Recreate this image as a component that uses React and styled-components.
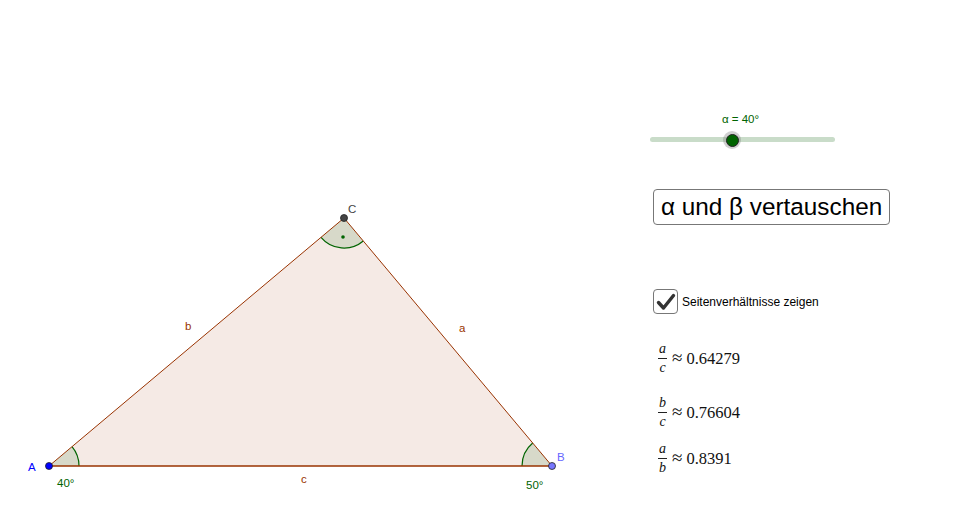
import React from 'react';
import styled, { createGlobalStyle } from 'styled-components';

const Global = createGlobalStyle`
  html, body { margin: 0; padding: 0; background: #fff; }
  body { font-family: "Liberation Sans", Arial, sans-serif; }
`;

const Page = styled.div`
  width: 960px;
  height: 532px;
  display: flex;
  overflow: hidden;
  background: #fff;
`;

const Board = styled.svg`
  flex: 0 0 650px;
  height: 532px;
  font-family: "Liberation Sans", Arial, sans-serif;
`;

const Panel = styled.div`
  display: flex;
  flex-direction: column;
  align-items: flex-start;
  padding-top: 112px;
`;

const SliderBox = styled.div`
  width: 185px;
  display: flex;
  flex-direction: column;
  align-items: center;
`;

const SliderLabel = styled.div`
  font-size: 11.5px;
  line-height: 14px;
  color: #006400;
  margin-left: -4px;
`;

const Track = styled.div`
  position: relative;
  width: 185px;
  height: 18px;
  margin-top: 5px;
  &::before {
    content: '';
    position: absolute;
    left: 0;
    right: 0;
    top: 6px;
    height: 5px;
    border-radius: 3px;
    background: #c9dcc9;
  }
`;

const Knob = styled.div`
  position: absolute;
  top: 0;
  width: 18px;
  height: 18px;
  margin-left: -9px;
  border-radius: 50%;
  background: rgba(120, 120, 120, 0.35);
  display: flex;
  align-items: center;
  justify-content: center;
  &::after {
    content: '';
    width: 11px;
    height: 11px;
    border-radius: 50%;
    background: #006400;
    border: 1px solid #222;
  }
`;

const SwapButton = styled.button`
  margin-top: 40px;
  margin-left: 3px;
  height: 36px;
  padding: 0 7px;
  border: 1px solid #777;
  border-radius: 4px;
  background: #fff;
  font-family: "Liberation Sans", Arial, sans-serif;
  font-size: 24.3px;
  color: #000;
  line-height: 34px;
`;

const CheckRow = styled.label`
  margin-top: 64px;
  margin-left: 3px;
  display: flex;
  align-items: center;
  gap: 4px;
  font-size: 12px;
  color: #000;
`;

const Box = styled.span`
  width: 23px;
  height: 23px;
  border: 1.5px solid #777;
  border-radius: 4px;
  display: flex;
  align-items: center;
  justify-content: center;
`;

const Formula = styled.div`
  margin-top: ${p => p.$gap}px;
  margin-left: 8px;
  height: 32px;
  display: flex;
  align-items: center;
  gap: 5px;
  font-family: "Liberation Serif", "Times New Roman", serif;
  font-size: 16.5px;
  color: #111;
`;

const Approx = styled.span`
  font-size: 19px;
  margin-right: 4px;
`;

const Frac = styled.span`
  display: inline-flex;
  flex-direction: column;
  align-items: center;
  font-style: italic;
  font-size: 14px;
  line-height: 14px;
  & > span:first-child {
    border-bottom: 1px solid #222;
    padding: 0 1px 2px;
  }
  & > span:last-child {
    padding-top: 2px;
  }
`;

const A = [49, 466];
const B = [552, 466];
const C = [344, 218];

function Triangle() {
  const brown = '#993300';
  const green = '#006400';
  const sector = 'rgba(0,100,0,0.12)';
  return (
    <Board viewBox="0 0 650 532">
      <polygon
        points={`${A} ${B} ${C}`}
        fill="rgba(153,51,0,0.1)"
        stroke="none"
      />
      {/* angle at A */}
      <path d="M49 466 L79 466 A30 30 0 0 0 72 446.7 Z" fill={sector} />
      <path d="M79 466 A30 30 0 0 0 72 446.7" fill="none" stroke={green} strokeWidth="1.2" />
      {/* angle at B */}
      <path d="M552 466 L522 466 A30 30 0 0 1 532.7 443 Z" fill={sector} />
      <path d="M522 466 A30 30 0 0 1 532.7 443" fill="none" stroke={green} strokeWidth="1.2" />
      {/* angle at C, right angle dot */}
      <path d="M344 218 L321 237.3 A30 30 0 0 0 363.3 241 Z" fill={sector} />
      <path d="M321 237.3 A30 30 0 0 0 363.3 241" fill="none" stroke={green} strokeWidth="1.2" />
      <circle cx="343" cy="237" r="1.8" fill={green} />

      <line x1={A[0]} y1={A[1]} x2={B[0]} y2={B[1]} stroke={brown} strokeWidth="1.6" />
      <line x1={A[0]} y1={A[1]} x2={C[0]} y2={C[1]} stroke={brown} strokeWidth="1" />
      <line x1={B[0]} y1={B[1]} x2={C[0]} y2={C[1]} stroke={brown} strokeWidth="1" />

      <circle cx={A[0]} cy={A[1]} r="3.5" fill="#0000ff" stroke="#222" strokeWidth="0.8" />
      <circle cx={B[0]} cy={B[1]} r="3.5" fill="#7777ff" stroke="#222" strokeWidth="0.8" />
      <circle cx={C[0]} cy={C[1]} r="3.5" fill="#444" stroke="#222" strokeWidth="0.8" />

      <g fontSize="11.5">
        <text x="28" y="471" fill="#0000ff">A</text>
        <text x="557" y="461" fill="#6666ff">B</text>
        <text x="348" y="213" fill="#444">C</text>
        <text x="185" y="330" fill={brown}>b</text>
        <text x="459" y="332" fill={brown}>a</text>
        <text x="301" y="483" fill={brown}>c</text>
        <text x="57" y="487" fill={green}>40°</text>
        <text x="526" y="489" fill={green}>50°</text>
      </g>
    </Board>
  );
}

function Ratio({ num, den, value, gap }) {
  return (
    <Formula $gap={gap}>
      <Frac>
        <span>{num}</span>
        <span>{den}</span>
      </Frac>
      <span><Approx>≈</Approx>{value}</span>
    </Formula>
  );
}

export default function App() {
  return (
    <Page>
      <Global />
      <Triangle />
      <Panel>
        <SliderBox>
          <SliderLabel>α = 40°</SliderLabel>
          <Track>
            <Knob style={{ left: `${(82 / 185) * 100}%` }} />
          </Track>
        </SliderBox>
        <SwapButton>α und β vertauschen</SwapButton>
        <CheckRow>
          <Box>
            <svg width="20" height="18" viewBox="0 0 20 18">
              <path d="M2.5 9.5 L7.5 15 L17.5 2.5" fill="none" stroke="#333" strokeWidth="3.4" strokeLinecap="round" strokeLinejoin="round" />
            </svg>
          </Box>
          Seitenverhältnisse zeigen
        </CheckRow>
        <Ratio num="a" den="c" value="0.64279" gap={28} />
        <Ratio num="b" den="c" value="0.76604" gap={22} />
        <Ratio num="a" den="b" value="0.8391" gap={14} />
      </Panel>
    </Page>
  );
}
